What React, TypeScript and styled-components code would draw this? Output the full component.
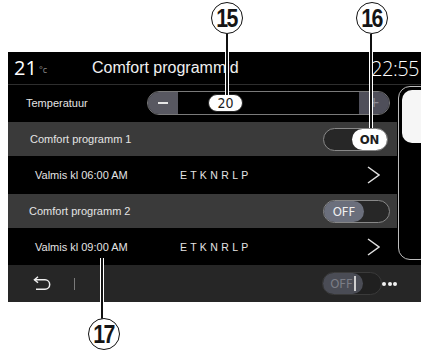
import React from "react";
import styled, { createGlobalStyle } from "styled-components";

const Global = createGlobalStyle`
  html, body { margin: 0; padding: 0; background: #fff; }
  body { width: 421px; height: 351px; overflow: hidden; font-family: "Liberation Sans", Arial, sans-serif; }
  * { box-sizing: border-box; }
`;

const Page = styled.div`
  position: relative;
  width: 421px;
  height: 351px;
  padding: 52px 0 0 8px;
`;

const Panel = styled.div`
  width: 413px;
  height: 250px;
  background: #000;
  overflow: hidden;
  display: grid;
  grid-template-columns: 413px;
  grid-template-rows: 33px 180px 37px;
`;

const Header = styled.div`
  display: flex;
  align-items: center;
  border-bottom: 1px solid #2e2e2e;
  color: #f2f2f2;
  min-width: 0;
`;

const Temp = styled.div`
  width: 84px;
  padding-left: 6px;
  display: flex;
  align-items: flex-start;
  font-family: "Open Sans", sans-serif;
  font-weight: 400;
  font-size: 20px;
  line-height: 20px;
  color: #fff;
`;

const TempUnit = styled.span`
  font-size: 9px;
  line-height: 9px;
  color: #8a8a8a;
  margin: 7px 0 0 2px;
`;

const Title = styled.div`
  font-size: 16px;
  color: #f0f0f0;
`;

const Clock = styled.div`
  margin-left: auto;
  margin-right: 2px;
  font-family: "Open Sans", sans-serif;
  font-weight: 300;
  font-size: 20px;
  letter-spacing: -0.5px;
  color: #fff;
`;

const Body = styled.div`
  display: grid;
  grid-template-columns: 389px minmax(0, 1fr);
  min-width: 0;
`;

const List = styled.div`
  display: flex;
  flex-direction: column;
`;

const Row = styled.div<{ $gray?: boolean; $indent: number }>`
  height: 36px;
  display: flex;
  align-items: center;
  padding-left: ${(p) => p.$indent}px;
  background: ${(p) => (p.$gray ? "#3a3a3a" : "#000")};
  border-top: ${(p) => (p.$gray ? "1px solid #000" : "none")};
  border-bottom: ${(p) => (p.$gray ? "1px solid #000" : "none")};
  color: #e4e4e4;
  font-size: 11px;
`;

const Label = styled.div<{ $width?: number }>`
  width: ${(p) => (p.$width ? `${p.$width}px` : "auto")};
  white-space: nowrap;
`;

const Days = styled.div`
  font-size: 10.5px;
  word-spacing: 0.5px;
  color: #e4e4e4;
`;

const Slider = styled.div`
  margin-left: auto;
  margin-right: 7px;
  width: 243px;
  height: 24px;
  border: 1.5px solid #7a7a7a;
  border-radius: 12px;
  overflow: hidden;
  display: flex;
  background: #000;
`;

const SliderBtn = styled.div<{ $dim?: boolean }>`
  width: 30px;
  background: ${(p) => (p.$dim ? "#4f4f5a" : "#585861")};
  display: flex;
  align-items: center;
  justify-content: center;
  color: ${(p) => (p.$dim ? "#8a8a94" : "#e8e8e8")};
  font-size: 18px;
  line-height: 1;
`;

const MinusBar = styled.div`
  width: 10px;
  height: 2px;
  background: #e6e6e6;
`;

const SliderTrack = styled.div`
  flex: 1;
  display: flex;
  align-items: center;
  padding-left: 30px;
`;

const Bubble = styled.div`
  width: 35px;
  height: 18px;
  border-radius: 9px;
  background: #fff;
  border: 1px solid #222;
  color: #1a1a1a;
  font-family: "DejaVu Sans Condensed", "Liberation Sans", sans-serif;
  font-size: 14px;
  display: flex;
  align-items: center;
  justify-content: center;
`;

const Toggle = styled.div<{ $on?: boolean; $dim?: boolean; $width: number }>`
  margin-left: auto;
  margin-right: ${(p) => (p.$dim ? 0 : p.$on ? 9 : 7)}px;
  width: ${(p) => p.$width}px;
  height: 23px;
  border-radius: 12px;
  border: 1.5px solid ${(p) => (p.$dim ? "#3a3a3a" : "#888")};
  background: ${(p) => (p.$dim ? "#202020" : "#272727")};
  display: flex;
  justify-content: ${(p) => (p.$on ? "flex-end" : "flex-start")};
`;

const Knob = styled.div<{ $on?: boolean; $dim?: boolean }>`
  width: ${(p) => (p.$on ? 35 : 40)}px;
  height: 100%;
  border-radius: 11px;
  background: ${(p) => (p.$on ? "#fff" : p.$dim ? "#4a4c55" : "#6b6f7c")};
  color: ${(p) => (p.$on ? "#1e1e1e" : p.$dim ? "#7b7d86" : "#f0f0f0")};
  font-family: "DejaVu Sans Condensed", "Liberation Sans", sans-serif;
  font-weight: ${(p) => (p.$on ? 700 : 400)};
  font-size: 13px;
  display: flex;
  align-items: center;
  justify-content: center;
  gap: 1px;
`;

const Cursor = styled.span`
  width: 2px;
  height: 15px;
  background: #cfcfcf;
`;

const Chevron = styled.svg`
  margin-left: auto;
  margin-right: 17px;
  width: 13px;
  height: 18px;
`;

const ScrollCol = styled.div`
  padding: 1px 0 5px 1px;
  min-width: 0;
`;

const Track = styled.div`
  width: 34px;
  height: 100%;
  border: 1.5px solid #bdbdbd;
  border-radius: 12px;
  padding: 3px 0 0 2.5px;
`;

const Thumb = styled.div`
  width: 30px;
  height: 53px;
  border-radius: 10px;
  background: #f6f6f6;
`;

const BottomBar = styled.div`
  display: flex;
  align-items: center;
  background: #262626;
  padding-left: 25px;
`;

const BackIcon = styled.svg`
  width: 18px;
  height: 16px;
`;

const Divider = styled.div`
  width: 1px;
  height: 12px;
  background: #7a7a7a;
  margin-left: 23px;
`;

const Dots = styled.div`
  display: flex;
  gap: 1.5px;
  margin-right: 24px;
`;

const Dot = styled.span`
  width: 4px;
  height: 4px;
  border-radius: 50%;
  background: #f2f2f2;
`;

const Callout = styled.div<{ $x: number; $y: number }>`
  position: absolute;
  left: ${(p) => p.$x - 16}px;
  top: ${(p) => p.$y - 16}px;
  width: 32px;
  height: 32px;
  border-radius: 50%;
  border: 1.5px solid #111;
  background: #fff;
  display: flex;
  align-items: center;
  justify-content: center;
  font-family: "Liberation Sans", Arial, sans-serif;
  font-weight: 700;
  font-size: 26px;
  letter-spacing: -2px;
  color: #151515;
  z-index: 3;
`;

const CalloutText = styled.span`
  display: inline-block;
  transform: scaleX(0.82);
  margin-left: -2px;
`;

const Leader = styled.div<{ $x: number; $top: number; $bottom: number }>`
  position: absolute;
  left: ${(p) => p.$x - 2}px;
  top: ${(p) => p.$top}px;
  height: ${(p) => p.$bottom - p.$top}px;
  width: 4px;
  border-left: 1px solid #fff;
  border-right: 1px solid #fff;
  background: #111;
  z-index: 2;
`;

const ChevronIcon = () => (
  <Chevron viewBox="0 0 13 18">
    <polyline points="1,1 12,9 1,17" fill="none" stroke="#e0e0e0" strokeWidth="1.5" />
  </Chevron>
);

export default function App() {
  return (
    <>
      <Global />
      <Page>
        <Panel>
          <Header>
            <Temp>
              21<TempUnit>°c</TempUnit>
            </Temp>
            <Title>Comfort programmid</Title>
            <Clock>22:55</Clock>
          </Header>
          <Body>
            <List>
              <Row $indent={18}>
                <Label>Temperatuur</Label>
                <Slider>
                  <SliderBtn>
                    <MinusBar />
                  </SliderBtn>
                  <SliderTrack>
                    <Bubble>20</Bubble>
                  </SliderTrack>
                  <SliderBtn $dim>+</SliderBtn>
                </Slider>
              </Row>
              <Row $gray $indent={22}>
                <Label>Comfort programm 1</Label>
                <Toggle $on $width={65}>
                  <Knob $on>ON</Knob>
                </Toggle>
              </Row>
              <Row $indent={27}>
                <Label $width={145}>Valmis kl 06:00 AM</Label>
                <Days>E T K N R L P</Days>
                <ChevronIcon />
              </Row>
              <Row $gray $indent={21}>
                <Label>Comfort programm 2</Label>
                <Toggle $width={67}>
                  <Knob>OFF</Knob>
                </Toggle>
              </Row>
              <Row $indent={27}>
                <Label $width={145}>Valmis kl 09:00 AM</Label>
                <Days>E T K N R L P</Days>
                <ChevronIcon />
              </Row>
            </List>
            <ScrollCol>
              <Track>
                <Thumb />
              </Track>
            </ScrollCol>
          </Body>
          <BottomBar>
            <BackIcon viewBox="0 0 18 16">
              <path d="M5 0.8 L1.5 3.8 L5 6.8" fill="none" stroke="#eee" strokeWidth="1.5" />
              <path d="M1.5 3.8 H12 A4.7 4.7 0 0 1 12 13.2 H3" fill="none" stroke="#eee" strokeWidth="1.5" />
            </BackIcon>
            <Divider />
            <Toggle $dim $width={60}>
              <Knob $dim>
                OFF<Cursor />
              </Knob>
            </Toggle>
            <Dots>
              <Dot />
              <Dot />
              <Dot />
            </Dots>
          </BottomBar>
        </Panel>
        <Leader $x={227} $top={34} $bottom={95} />
        <Callout $x={227} $y={18}>
          <CalloutText>15</CalloutText>
        </Callout>
        <Leader $x={371} $top={34} $bottom={128} />
        <Callout $x={372} $y={18}>
          <CalloutText>16</CalloutText>
        </Callout>
        <Leader $x={102} $top={258} $bottom={319} />
        <Callout $x={104} $y={334}>
          <CalloutText>17</CalloutText>
        </Callout>
      </Page>
    </>
  );
}
